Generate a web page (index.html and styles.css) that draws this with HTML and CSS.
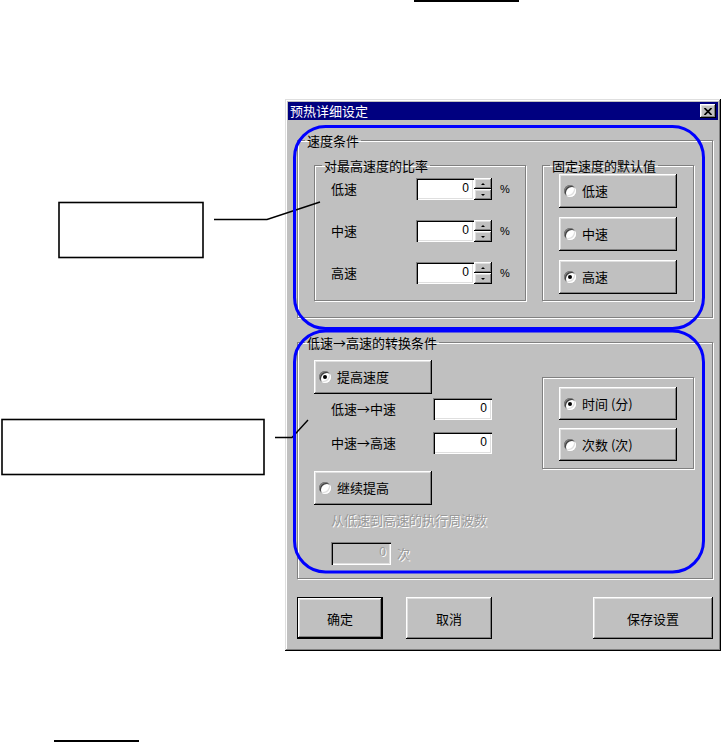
FILE: index.html
```html
<!DOCTYPE html>
<html lang="zh-CN">
<head>
<meta charset="utf-8">
<title>预热详细设定</title>
<link rel="stylesheet" href="styles.css">
</head>
<body>
<div class="page">
  <div class="rule-top"></div>
  <div class="dialog">
    <div class="titlebar">
      <span class="title">预热详细设定</span>
      <span class="close"><svg width="8" height="7" viewBox="0 0 8 7"><path d="M0.5 0 L7.5 7 M7.5 0 L0.5 7" stroke="#000" stroke-width="1.7" fill="none"/></svg></span>
    </div>
    <div class="body">
      <fieldset class="group g-speed">
        <legend>速度条件</legend>
        <div class="g-speed-body">
          <fieldset class="group g-ratio">
            <legend>对最高速度的比率</legend>
            <div class="ratio-rows">
              <div class="ratio-row"><span class="lbl">低速</span><span class="input">0</span><span class="spin"><span class="up"></span><span class="down"></span></span><span class="pct">%</span></div>
              <div class="ratio-row"><span class="lbl">中速</span><span class="input">0</span><span class="spin"><span class="up"></span><span class="down"></span></span><span class="pct">%</span></div>
              <div class="ratio-row"><span class="lbl">高速</span><span class="input">0</span><span class="spin"><span class="up"></span><span class="down"></span></span><span class="pct">%</span></div>
            </div>
          </fieldset>
          <fieldset class="group g-fixed">
            <legend>固定速度的默认值</legend>
            <div class="stack">
              <div class="rbtn"><span class="radio"></span>低速</div>
              <div class="rbtn"><span class="radio"></span>中速</div>
              <div class="rbtn"><span class="radio on"></span>高速</div>
            </div>
          </fieldset>
        </div>
      </fieldset>

      <fieldset class="group g-trans">
        <legend>低速→高速的转换条件</legend>
        <div class="g-trans-body">
          <div class="trans-left">
            <div class="rbtn"><span class="radio on"></span>提高速度</div>
            <div class="trans-row r1"><span class="tlbl">低速→中速</span><span class="input wide">0</span></div>
            <div class="trans-row r2"><span class="tlbl">中速→高速</span><span class="input wide">0</span></div>
            <div class="rbtn r-cont"><span class="radio"></span>继续提高</div>
            <div class="dis-lbl">从低速到高速的执行周波数</div>
            <div class="dis-row"><span class="input dis">0</span><span class="dis-text">次</span></div>
          </div>
          <fieldset class="group g-unit">
            <div class="unit-stack">
              <div class="rbtn short"><span class="radio on"></span>时间 (分)</div>
              <div class="rbtn short"><span class="radio"></span>次数 (次)</div>
            </div>
          </fieldset>
        </div>
      </fieldset>

      <div class="actions">
        <div class="btn default">确定</div>
        <div class="btn cancel">取消</div>
        <div class="btn save">保存设置</div>
      </div>
    </div>
  </div>
  <div class="rule-bottom"></div>

  <svg class="annot" width="723" height="742" viewBox="0 0 723 742">
    <rect x="59" y="202.5" width="144" height="55" fill="#fff" stroke="#000" stroke-width="1.6"/>
    <polyline points="214,219.5 267,219.5 320,202" fill="none" stroke="#000" stroke-width="1.4"/>
    <rect x="2" y="419.5" width="262" height="55" fill="#fff" stroke="#000" stroke-width="1.6"/>
    <polyline points="275,437.5 292,437.5 308,420" fill="none" stroke="#000" stroke-width="1.4"/>
    <rect x="294.5" y="126.5" width="409" height="202" rx="31" ry="31" fill="none" stroke="#0000ff" stroke-width="3"/>
    <rect x="294.5" y="331" width="409" height="241" rx="31" ry="31" fill="none" stroke="#0000ff" stroke-width="3"/>
  </svg>
</div>
</body>
</html>
```

FILE: styles.css
```css
* { box-sizing: border-box; }
html, body { margin: 0; padding: 0; background: #fff; }
body {
  font-family: "Noto Sans CJK SC", "Noto Sans", sans-serif;
  font-size: 13px;
  color: #000;
}
.page { position: relative; width: 723px; height: 742px; overflow: hidden; }

.rule-top { margin-left: 414px; width: 105px; height: 2px; background: #000; }
.rule-bottom { margin: 89px 0 0 54px; width: 85px; height: 2px; background: #000; }

.dialog {
  margin: 97px 0 0 285px;
  width: 436px;
  height: 552px;
  padding: 3px;
  background: #c0c0c0;
  box-shadow: inset -1px -1px 0 #000, inset 1px 1px 0 #dfdfdf,
              inset -2px -2px 0 #808080, inset 2px 2px 0 #fff;
}

.titlebar {
  height: 18px;
  background: #000080;
  display: flex;
  align-items: center;
  justify-content: space-between;
  padding: 0 2px 0 2px;
  color: #fff;
}
.title { font-size: 13px; line-height: 18px; }
.close {
  width: 16px; height: 14px;
  background: #c0c0c0;
  display: flex; align-items: center; justify-content: center;
  box-shadow: inset -1px -1px 0 #000, inset 1px 1px 0 #fff,
              inset -2px -2px 0 #808080, inset 2px 2px 0 #dfdfdf;
}
.close svg { display: block; }

.body { padding: 13px 5px 0 9px; }

.group {
  margin: 0;
  padding: 0;
  min-width: 0;
  border: 1px solid #808080;
  box-shadow: inset 1px 1px 0 #fff, 1px 1px 0 #fff;
}
.group legend {
  margin-left: 7px;
  padding: 0 2px;
  height: 15px;
  line-height: 15px;
  font-size: 13px;
}

/* speed group */
.g-speed { width: 416px; }
.g-speed-body { display: flex; gap: 16px; padding: 10px 0 16px 16px; }
.g-ratio { width: 212px; }
.g-fixed { width: 152px; }

.ratio-rows { display: flex; flex-direction: column; gap: 20px; padding: 5px 0 16px 16px; }
.ratio-row { display: flex; align-items: center; height: 22px; }
.lbl { width: 85px; line-height: 16px; }

.input {
  display: block;
  width: 58px;
  height: 22px;
  background: #fff;
  box-shadow: inset 1px 1px 0 #808080, inset 2px 2px 0 #000,
              inset -1px -1px 0 #fff, inset -2px -2px 0 #dfdfdf;
  text-align: right;
  padding-right: 5px;
  font-family: "Liberation Sans", sans-serif;
  font-size: 12px;
  line-height: 21px;
}
.input.wide { width: 59px; }
.input.dis {
  width: 60px;
  height: 23px;
  background: #c0c0c0;
  color: #9a9a9a;
  text-shadow: 1px 1px 0 #fff;
}

.spin { width: 18px; height: 22px; display: flex; flex-direction: column; }
.spin span {
  flex: 1;
  display: flex; align-items: center; justify-content: center;
  background: #c0c0c0;
  box-shadow: inset -1px -1px 0 #000, inset 1px 1px 0 #fff,
              inset -2px -2px 0 #808080, inset 2px 2px 0 #dfdfdf;
}
.spin .up::before, .spin .down::before {
  content: "";
  width: 0; height: 0;
  border-left: 2px solid transparent;
  border-right: 2px solid transparent;
}
.spin .up::before { border-bottom: 2px solid #000; }
.spin .down::before { border-top: 2px solid #000; }
.pct { margin-left: 8px; font-family: "Liberation Sans", sans-serif; font-size: 11px; }

.stack { display: flex; flex-direction: column; gap: 9px; padding: 1px 0 6px 16px; }

.rbtn {
  width: 118px;
  height: 34px;
  display: flex;
  align-items: center;
  gap: 6px;
  padding-left: 5px;
  background: #c0c0c0;
  line-height: 16px;
  box-shadow: inset -1px -1px 0 #000, inset 1px 1px 0 #fff,
              inset -2px -2px 0 #808080, inset 2px 2px 0 #dfdfdf;
}
.rbtn.short { height: 33px; }
.radio {
  position: relative;
  width: 12px; height: 12px;
  border-radius: 50%;
  background: #fff;
  flex: none;
  box-shadow: inset 1px 1px 0 #808080, inset -1px -1px 0 #fff,
              inset 2px 2px 0 #404040, inset -2px -2px 0 #dfdfdf;
}
.radio.on::after {
  content: "";
  position: absolute;
  left: 4px; top: 4px;
  width: 4px; height: 4px;
  border-radius: 50%;
  background: #000;
}

/* transition group */
.g-trans { width: 416px; margin-top: 17px; }
.g-trans-body { display: flex; align-items: flex-start; padding: 10px 0 13px 16px; }
.trans-left { width: 228px; display: flex; flex-direction: column; }
.trans-row { display: flex; align-items: center; height: 22px; }
.trans-row.r1 { margin-top: 4px; }
.trans-row.r2 { margin-top: 12px; }
.tlbl { width: 119px; padding-left: 17px; line-height: 16px; }
.r-cont { margin-top: 17px; }
.dis-lbl {
  margin-top: 7px;
  padding-left: 17px;
  line-height: 16px;
  color: #9a9a9a;
  text-shadow: 1px 1px 0 #fff;
}
.dis-row { margin-top: 14px; padding-left: 17px; display: flex; align-items: center; height: 23px; }
.dis-text { margin-left: 6px; color: #9a9a9a; text-shadow: 1px 1px 0 #fff; }

.g-unit { width: 152px; margin-top: 17px; }
.unit-stack { display: flex; flex-direction: column; gap: 8px; padding: 9px 0 7px 16px; }

/* bottom buttons */
.actions { display: flex; margin-top: 18px; }
.btn {
  height: 42px;
  display: flex; align-items: center; justify-content: center;
  background: #c0c0c0;
  box-shadow: inset -1px -1px 0 #000, inset 1px 1px 0 #fff,
              inset -2px -2px 0 #808080, inset 2px 2px 0 #dfdfdf;
}
.btn.default {
  width: 86px;
  border: 1px solid #000;
}
.btn.cancel { width: 86px; margin-left: 23px; }
.btn.save { width: 120px; margin-left: auto; }

.annot { position: absolute; left: 0; top: 0; pointer-events: none; }
```
